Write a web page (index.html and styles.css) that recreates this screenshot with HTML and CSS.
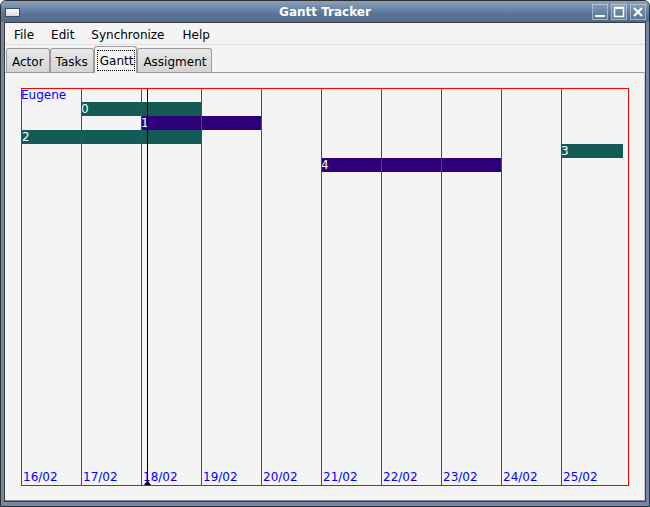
FILE: index.html
```html
<!DOCTYPE html>
<html>
<head>
<meta charset="utf-8">
<link rel="stylesheet" href="styles.css">
</head>
<body>
<div class="window">
  <div class="titlebar">
    <span class="app-icon"></span>
    <span class="title">Gantt Tracker</span>
    <div class="wm-buttons">
      <span class="wm-btn"><svg width="14" height="14" viewBox="0 0 14 14"><rect x="2" y="10" width="10" height="2" fill="#fff"/></svg></span>
      <span class="wm-btn"><svg width="14" height="14" viewBox="0 0 14 14"><rect x="2.5" y="2.5" width="9" height="9" fill="none" stroke="#fff" stroke-width="1.6"/><rect x="2" y="2" width="10" height="2" fill="#fff"/></svg></span>
      <span class="wm-btn"><svg width="14" height="14" viewBox="0 0 14 14"><path d="M3 3 L11 11 M11 3 L3 11" stroke="#fff" stroke-width="2.2"/></svg></span>
    </div>
  </div>
  <div class="client">
    <div class="menubar">
      <span class="menu-item">File</span>
      <span class="menu-item">Edit</span>
      <span class="menu-item">Synchronize</span>
      <span class="menu-item">Help</span>
    </div>
    <div class="tabs">
      <span class="tab">Actor</span>
      <span class="tab">Tasks</span>
      <span class="tab selected"><span class="focus">Gantt</span></span>
      <span class="tab">Assigment</span>
    </div>
    <div class="panel">
      <div class="chart">
        <div class="bars">
          <div class="bar teal" style="left:60px;top:13px;width:120px">0</div>
          <div class="bar purple" style="left:120px;top:27px;width:120px">1</div>
          <div class="bar teal" style="left:1px;top:41px;width:179px">2</div>
          <div class="bar teal" style="left:540px;top:55px;width:62px">3</div>
          <div class="bar purple" style="left:300px;top:69px;width:180px">4</div>
        </div>
        <div class="actor">Eugene</div>
        <div class="day"><span>16/02</span></div>
        <div class="day"><span>17/02</span></div>
        <div class="day"><span>18/02</span></div>
        <div class="day"><span>19/02</span></div>
        <div class="day"><span>20/02</span></div>
        <div class="day"><span>21/02</span></div>
        <div class="day"><span>22/02</span></div>
        <div class="day"><span>23/02</span></div>
        <div class="day"><span>24/02</span></div>
        <div class="day"><span>25/02</span></div>
        <div class="cursor"><span class="cursor-mark"></span></div>
      </div>
    </div>
  </div>
</div>
</body>
</html>
```
FILE: styles.css
```css
html, body {
  margin: 0;
  padding: 0;
  background: #ffffff;
}
body {
  font-family: "DejaVu Sans", "Liberation Sans", sans-serif;
  font-size: 12px;
}
.window {
  width: 650px;
  height: 507px;
  box-sizing: border-box;
  border: 1px solid #2e2e2e;
  border-radius: 6px 6px 0 0;
  background: #7189a6;
  display: flex;
  flex-direction: column;
}
.titlebar {
  height: 21px;
  flex: none;
  display: grid;
  grid-template-columns: 1fr auto 1fr;
  align-items: center;
  background: linear-gradient(#8aa1bd, #5a7597 60%, #4f6a8c);
  border-radius: 5px 5px 0 0;
}
.app-icon {
  justify-self: start;
  width: 13px;
  height: 7px;
  margin-left: 4px;
  margin-top: 1px;
  border: 1px solid #3b4b60;
  background: linear-gradient(#ffffff, #d8d8d8);
}
.title {
  text-align: center;
  color: #ffffff;
  font-weight: bold;
  font-size: 12px;
}
.wm-buttons {
  justify-self: end;
  display: flex;
  gap: 3px;
  margin-right: 3px;
}
.wm-btn {
  width: 14px;
  height: 14px;
  border: 1px solid rgba(210, 225, 240, 0.55);
  background: rgba(255, 255, 255, 0.08);
  display: flex;
}
.client {
  flex: 1;
  margin: 0 3px 4px 3px;
  border: 1px solid #3a3a3a;
  background: #f4f4f4;
  display: flex;
  flex-direction: column;
}
.menubar {
  height: 18px;
  padding: 3px 0 0 1px;
  border-bottom: 1px solid #e0e0e0;
  display: flex;
  line-height: 19px;
  color: #000;
}
.menu-item {
  padding: 0 8px;
  margin-right: 1px;
}
.menu-item:nth-child(3) {
  padding-right: 9px;
}
.tabs {
  height: 27px;
  flex: none;
  display: flex;
  align-items: flex-end;
  padding-left: 1px;
  position: relative;
  z-index: 1;
}
.tab {
  box-sizing: border-box;
  height: 24px;
  padding: 2px 5px 0 5px;
  line-height: 22px;
  border: 1px solid #9a9a9a;
  border-bottom: none;
  border-radius: 3px 3px 0 0;
  background: linear-gradient(#e8e8e8, #d4d4d4);
}
.tab.selected {
  height: 27px;
  margin-bottom: -1px;
  padding: 3px 1px 0 2px;
  background: #f4f4f4;
  position: relative;
  z-index: 2;
}
.focus {
  display: block;
  box-sizing: border-box;
  height: 21px;
  padding: 2px 1px 0 2px;
  line-height: 17px;
  border: 1px dotted #000;
}
.panel {
  flex: 1;
  border-top: 1px solid #9a9a9a;
  border-bottom: 1px solid #8a8a8a;
  border-right: 1px solid #cfcfcf;
  padding: 15px 0 0 16px;
}
.chart {
  position: relative;
  box-sizing: border-box;
  width: 608px;
  height: 398px;
  border: 1px solid #ff0000;
  border-left: none;
  display: flex;
}
.bars {
  position: absolute;
  inset: 0;
  z-index: 0;
}
.bar {
  position: absolute;
  height: 14px;
  line-height: 14px;
  color: #ffffff;
  font-size: 12px;
}
.teal {
  background: #145a57;
}
.purple {
  background: #2d0077;
}
.actor {
  position: absolute;
  left: 0;
  top: -1px;
  line-height: 14px;
  color: #0000ff;
  z-index: 2;
}
.day {
  position: relative;
  z-index: 1;
  box-sizing: border-box;
  width: 60px;
  flex: none;
  border-left: 1px solid #ff0000;
  display: flex;
  flex-direction: column;
  justify-content: flex-end;
  padding: 0 0 1px 1px;
  line-height: 14px;
  color: #0000ff;
}
.cursor {
  position: absolute;
  left: 126px;
  top: -1px;
  width: 1px;
  height: 397px;
  background: #000000;
  z-index: 3;
}
.cursor-mark {
  position: absolute;
  left: -3px;
  bottom: 0;
  width: 1px;
  height: 0;
  border-left: 3px solid transparent;
  border-right: 3px solid transparent;
  border-bottom: 4px solid #000000;
}
```
